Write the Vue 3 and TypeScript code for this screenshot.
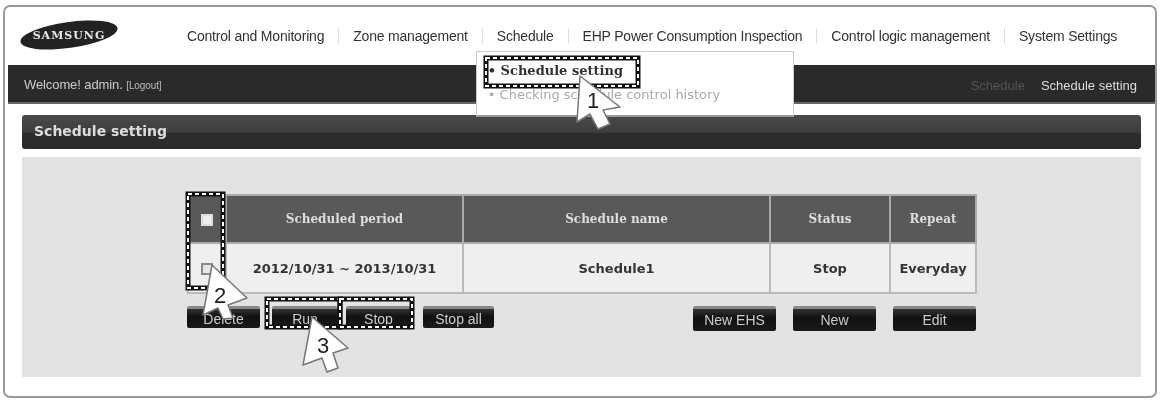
<script setup lang="ts">
const navItems: string[] = ['Control and Monitoring', 'Zone management', 'Schedule', 'EHP Power Consumption Inspection', 'Control logic management', 'System Settings']
const columns: string[] = ['Scheduled period', 'Schedule name', 'Status', 'Repeat']
const cursors = [
  { points: '580,76 620,107 603,110 610,124 598,129 590,114 577,122', label: '1', x: 593, y: 108 },
  { points: '212,265 247,298 228,305 233,318 223,319 218,308 203,315', label: '2', x: 220, y: 303 },
  { points: '312,317 348,348 333,353 338,368 327,372 322,358 303,365', label: '3', x: 323, y: 353 },
]
const marks = [
  { x: 486, y: 58, w: 152, h: 28 },
  { x: 188, y: 194, w: 35, h: 94 },
  { x: 267, y: 299, w: 73, h: 28 },
  { x: 340, y: 299, w: 72, h: 28 },
]
</script>

<template>
  <div class="stage">
    <div class="frame">
      <header class="top">
        <svg class="logo" width="100" height="32" viewBox="0 0 100 32">
          <ellipse cx="50" cy="16" rx="49" ry="13" transform="rotate(-8 50 16)" fill="#222" />
          <text x="50" y="20" text-anchor="middle" class="logo-text">SAMSUNG</text>
        </svg>
        <nav class="nav">
          <div v-for="(item, i) in navItems" :key="item" class="nav-item" :class="{ first: i === 0 }">
            {{ item }}
            <div v-if="item === 'Schedule'" class="dropdown">
              <div class="drop-active">• Schedule setting</div>
              <div class="drop-idle">• Checking schedule control history</div>
            </div>
          </div>
        </nav>
      </header>
      <div class="bar">
        <span class="welcome">Welcome! admin. <small class="logout">[Logout]</small></span>
        <span class="crumbs"><span class="crumb-dim">Schedule</span><span class="crumb">Schedule setting</span></span>
      </div>
      <div class="title">Schedule setting</div>
      <main class="panel">
        <table class="grid">
          <colgroup>
            <col class="c0" /><col class="c1" /><col class="c2" /><col class="c3" /><col class="c4" />
          </colgroup>
          <thead>
            <tr>
              <th><span class="check head-check"></span></th>
              <th v-for="c in columns" :key="c">{{ c }}</th>
            </tr>
          </thead>
          <tbody>
            <tr>
              <td><span class="check"></span></td>
              <td>2012/10/31 ~ 2013/10/31</td>
              <td>Schedule1</td>
              <td>Stop</td>
              <td>Everyday</td>
            </tr>
          </tbody>
        </table>
        <div class="actions">
          <div class="group">
            <button class="btn b-delete">Delete</button>
            <button class="btn b-run">Run</button>
            <button class="btn b-stop">Stop</button>
            <button class="btn b-all">Stop all</button>
          </div>
          <div class="group right">
            <button class="btn tall">New EHS</button>
            <button class="btn tall">New</button>
            <button class="btn tall">Edit</button>
          </div>
        </div>
      </main>
    </div>
    <svg class="overlay" width="1162" height="400" viewBox="0 0 1162 400">
      <g v-for="(m, i) in marks" :key="i">
        <rect :x="m.x" :y="m.y" :width="m.w" :height="m.h" fill="none" stroke="#111" stroke-width="5" />
        <rect :x="m.x" :y="m.y" :width="m.w" :height="m.h" fill="none" stroke="#fff" stroke-width="2" stroke-dasharray="4 3" />
      </g>
      <g v-for="c in cursors" :key="c.label">
        <polygon :points="c.points" fill="#fff" stroke="#777" stroke-width="1.5" stroke-linejoin="round" />
        <text :x="c.x" :y="c.y" text-anchor="middle" class="cursor-num">{{ c.label }}</text>
      </g>
    </svg>
  </div>
</template>

<style>
html, body { background: #fff; }
</style>

<style scoped>
.stage {
  position: relative;
  width: 1162px;
  height: 400px;
  padding: 5px 5px 2px 3px;
  box-sizing: border-box;
  overflow: hidden;
  font-family: "Liberation Sans", Arial, sans-serif;
  filter: blur(0.55px);
}
.frame {
  height: 393px;
  box-sizing: border-box;
  border: 2px solid #999;
  border-radius: 7px;
  background: #fff;
}
.top {
  display: flex;
  align-items: flex-start;
  height: 58px;
  padding-left: 14px;
}
.logo { margin-top: 12px; flex: none; }
.logo-text {
  font: bold 11px "DejaVu Serif", serif;
  letter-spacing: 1px;
  fill: #e8e8e8;
}
.nav {
  display: flex;
  margin-left: 54px;
  margin-top: 21px;
  font-size: 14px;
  line-height: 16px;
  letter-spacing: -0.2px;
  color: #333;
}
.nav-item {
  position: relative;
  padding: 0 14px;
  border-left: 1px solid #ddd;
  white-space: nowrap;
}
.nav-item.first { border-left: 0; }
.dropdown {
  position: absolute;
  left: -7px;
  top: 23px;
  width: 318px;
  height: 66px;
  box-sizing: border-box;
  padding: 7px 0 0 11px;
  background: #fff;
  border: 1px solid #ccc;
  border-bottom: 2px solid #999;
  z-index: 2;
  font-family: "DejaVu Sans", sans-serif;
  font-size: 13px;
  line-height: 24px;
  letter-spacing: 0;
}
.drop-active { font-family: "DejaVu Serif", serif; font-weight: 700; color: #333; }
.drop-idle { color: #aaa; }
.bar {
  display: flex;
  justify-content: space-between;
  align-items: flex-end;
  height: 39px;
  margin-left: 3px;
  padding: 0 18px 8px 16px;
  box-sizing: border-box;
  background: #2a2a2a;
  border-bottom: 2px solid #666;
  color: #ddd;
  font-size: 13px;
  line-height: 16px;
}
.welcome { color: #ccc; letter-spacing: -0.1px; }
.logout { font-size: 10px; color: #bbb; }
.crumbs { display: flex; gap: 16px; }
.crumb-dim { color: #555; }
.crumb { color: #ddd; }
.title {
  height: 34px;
  margin: 11px 14px 0 17px;
  padding-left: 12px;
  box-sizing: border-box;
  background: linear-gradient(#4a4a4a, #3e3e3e 50%, #2c2c2c 55%, #2a2a2a);
  border-radius: 3px;
  color: #ddd;
  font: bold 14px/32px "DejaVu Sans", sans-serif;
}
.panel {
  height: 220px;
  margin: 8px 14px 0 17px;
  padding: 37px 165px 0 165px;
  box-sizing: border-box;
  background: #e3e3e3;
}
.grid {
  width: 788px;
  border-collapse: collapse;
  table-layout: fixed;
}
.c0 { width: 38px; }
.c1 { width: 237px; }
.c2 { width: 307px; }
.c3 { width: 120px; }
.c4 { width: 86px; }
.grid th {
  height: 46px;
  padding: 0;
  background: #595959;
  border: 2px solid #aaa;
  color: #ddd;
  font: bold 12px "DejaVu Serif", serif;
}
.grid td {
  height: 48px;
  padding: 0;
  background: #efefef;
  border: 2px solid #bbb;
  color: #333;
  text-align: center;
  white-space: nowrap;
  font: bold 13px "DejaVu Sans", sans-serif;
}
.check {
  display: inline-block;
  width: 12px;
  height: 12px;
  vertical-align: middle;
  background: #e6e6e6;
  border: 2px solid #888;
  box-sizing: border-box;
}
.head-check { background: #eee; border-color: #ddd; }
.actions {
  display: flex;
  justify-content: space-between;
  margin-top: 12px;
  width: 789px;
}
.group { display: flex; align-items: flex-start; }
.right { gap: 17px; }
.btn {
  width: 83px;
  height: 25px;
  padding: 0;
  border: 0;
  border-top: 3px solid #888;
  border-radius: 2px;
  background: linear-gradient(#333, #111 40%, #1a1a1a);
  color: #ccc;
  font: 14px/18px "Liberation Sans", sans-serif;
}
.b-delete, .b-run, .b-stop, .b-all { height: 22px; }
.b-delete { width: 73px; }
.b-run { width: 66px; margin-left: 12px; }
.b-stop { width: 65px; margin-left: 8px; }
.b-all { width: 71px; margin-left: 12px; }
.overlay {
  position: absolute;
  left: 0;
  top: 0;
  z-index: 3;
}
.cursor-num {
  font: 22px "Liberation Sans", sans-serif;
  fill: #222;
}
</style>
